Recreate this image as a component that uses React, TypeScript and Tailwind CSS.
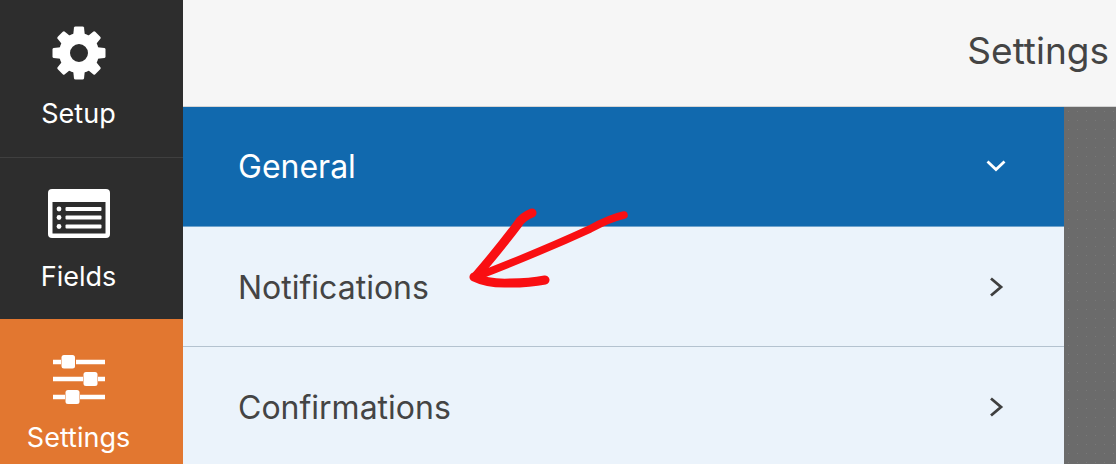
const font = "font-['Inter',Arial,sans-serif]";

const rotations = [0, 45, 90, 135, 180, 225, 270, 315];

const GearIcon = () => (
  <svg width="54" height="54" viewBox="0 0 54 54" className="block">
    <circle cx="27" cy="27" r="14.5" fill="none" stroke="#fff" strokeWidth="11" />
    {rotations.map((deg) => (
      <path
        key={deg}
        d="M21 11 L22 1.5 Q22.2 0.5 23.5 0.5 H30.5 Q31.8 0.5 32 1.5 L33 11 Z"
        fill="#fff"
        transform={`rotate(${deg} 27 27)`}
      />
    ))}
  </svg>
);

const FieldsIcon = () => (
  <svg width="62" height="50" viewBox="0 0 62 50" className="block">
    <rect x="0" y="0" width="62" height="49" rx="4" fill="#fff" />
    <rect x="4.5" y="13" width="53" height="31.5" fill="#2d2d2d" />
    <circle cx="11" cy="20" r="2.4" fill="#fff" />
    <circle cx="11" cy="28.5" r="2.4" fill="#fff" />
    <circle cx="11" cy="37.5" r="2.4" fill="#fff" />
    <rect x="17.5" y="18" width="36" height="4" rx="1" fill="#fff" />
    <rect x="17.5" y="26.5" width="36" height="4" rx="1" fill="#fff" />
    <rect x="17.5" y="35.5" width="36" height="4" rx="1" fill="#fff" />
  </svg>
);

const SlidersIcon = () => (
  <svg width="54" height="50" viewBox="0 0 54 50" className="block">
    <path d="M1 8h8M24 8h29M1 25h30M46 25h7M1 43h12M28 43h25" stroke="#fff" strokeWidth="4.5" fill="none" />
    <rect x="9.5" y="1" width="13.5" height="13.5" rx="2.5" fill="#fff" />
    <rect x="31.5" y="18" width="14" height="14" rx="2.5" fill="#fff" />
    <rect x="13.5" y="36" width="14" height="14" rx="2.5" fill="#fff" />
  </svg>
);

const navItems = [
  { id: 1, title: "Setup", icon: <GearIcon />, box: "h-[157px] pt-[26px]", iconBox: "h-[54px]", gap: "mt-[18px]" },
  { id: 2, title: "Fields", icon: <FieldsIcon />, box: "h-[162px] pt-[31px] border-t border-[#3f3f3f]", iconBox: "h-[50px]", gap: "mt-[22px]" },
  { id: 3, title: "Settings", icon: <SlidersIcon />, box: "h-[145px] pt-[35px] bg-[#e27730]", iconBox: "h-[50px]", gap: "mt-[18px]" },
];

const sections = [
  { id: 1, title: "General", open: true, offset: "pt-0" },
  { id: 2, title: "Notifications", open: false, offset: "pt-[2px]" },
  { id: 3, title: "Confirmations", open: false, offset: "pt-[3px]" },
];

const Chevron = ({ open }: { open: boolean }) => (
  <svg width="22" height="22" viewBox="0 0 22 22" className="block" fill="none" strokeWidth="2.8">
    {open ? (
      <path d="M2.5 5.5 L11 13.5 L19.5 5.5" stroke="#fff" />
    ) : (
      <path d="M6 1.5 L16 10 L6 18.5" stroke="#3f3f3f" />
    )}
  </svg>
);

export default function App() {
  return (
    <div className={`relative flex h-[464px] w-[1116px] overflow-hidden ${font}`}>
      <div className="w-[183px] shrink-0 bg-[#2d2d2d] text-white">
        {navItems.map((item) => (
          <div key={item.id} className={`flex flex-col items-center pr-[26px] ${item.box}`}>
            <div className={item.iconBox}>{item.icon}</div>
            <div className={`whitespace-nowrap text-[27px] leading-[32px] ${item.gap}`}>{item.title}</div>
          </div>
        ))}
      </div>
      <div className="flex min-w-0 flex-1 flex-col">
        <div className="flex h-[107px] shrink-0 items-center justify-end border-b border-[#d4d4d4] bg-[#f6f6f6] pb-[4px] pr-[7px] text-[37px] text-[#444]">
          Settings
        </div>
        <div className="flex flex-1">
          <div className="w-[881px]">
            {sections.map((s) => (
              <div
                key={s.id}
                className={`flex h-[120px] items-center justify-between pl-[55px] pr-[57px] text-[32px] ${s.offset} ${
                  s.open
                    ? "bg-[#1169ae] text-white border-b border-[#6fa3cc]"
                    : "bg-[#ebf3fb] text-[#444] border-b border-[#b4c2cf]"
                }`}
              >
                <span>{s.title}</span>
                <Chevron open={s.open} />
              </div>
            ))}
          </div>
          <div className="flex-1 bg-[#6b6b6b] bg-[radial-gradient(#797979_0.6px,transparent_0.8px)] bg-[size:9px_9px]" />
        </div>
      </div>
      {/* hand drawn arrow */}
      <svg className="absolute left-[460px] top-[200px]" width="180" height="95" viewBox="0 0 180 95" fill="none" stroke="#f90f12" strokeLinecap="round" strokeLinejoin="round">
        <path d="M72 13 Q62 17 58 24 Q40 48 16 76" strokeWidth="9" />
        <path d="M164 15 Q150 18 130 29 Q80 52 18 76" strokeWidth="7.5" />
        <path d="M14 77 Q28 84 50 83 Q70 83 85 80" strokeWidth="9" />
      </svg>
    </div>
  );
}
